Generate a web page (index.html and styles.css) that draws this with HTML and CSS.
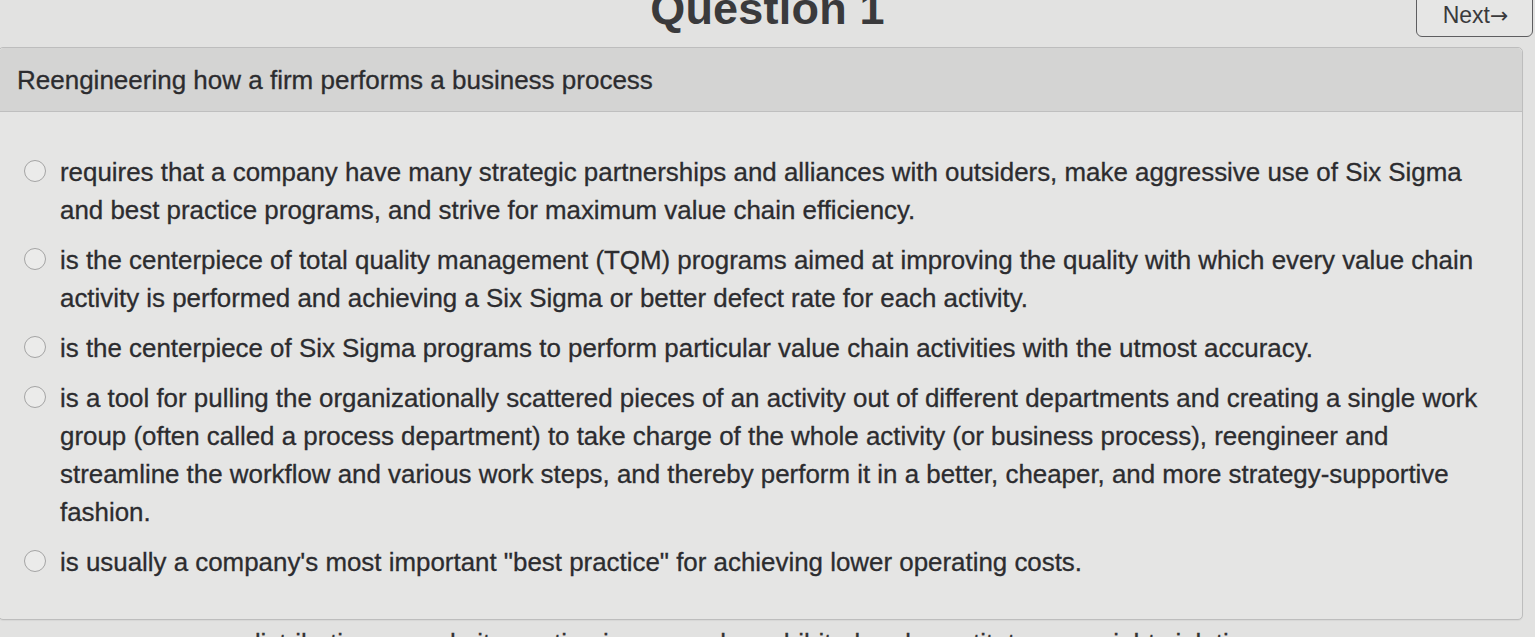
FILE: index.html
```html
<!DOCTYPE html>
<html lang="en">
<head>
<meta charset="utf-8">
<title>Question 1</title>
<link rel="stylesheet" href="styles.css">
</head>
<body>
<div class="page">
  <div class="topbar">
    <div class="spacer"></div>
    <h1 class="title">Question 1</h1>
    <div class="nav">
      <button class="next">Next<span class="arrow">→</span></button>
    </div>
  </div>
  <div class="card">
    <div class="card-head">Reengineering how a firm performs a business process</div>
    <div class="options">
      <label class="option"><span class="radio"></span><span class="opt-text">requires that a company have many strategic partnerships and alliances with outsiders, make aggressive use of Six Sigma and best practice programs, and strive for maximum value chain efficiency.</span></label>
      <label class="option"><span class="radio"></span><span class="opt-text">is the centerpiece of total quality management (TQM) programs aimed at improving the quality with which every value chain activity is performed and achieving a Six Sigma or better defect rate for each activity.</span></label>
      <label class="option"><span class="radio"></span><span class="opt-text">is the centerpiece of Six Sigma programs to perform particular value chain activities with the utmost accuracy.</span></label>
      <label class="option"><span class="radio"></span><span class="opt-text">is a tool for pulling the organizationally scattered pieces of an activity out of different departments and creating a single work group (often called a process department) to take charge of the whole activity (or business process), reengineer and streamline the workflow and various work steps, and thereby perform it in a better, cheaper, and more strategy-supportive fashion.</span></label>
      <label class="option"><span class="radio"></span><span class="opt-text">is usually a company's most important "best practice" for achieving lower operating costs.</span></label>
    </div>
  </div>
  <p class="footer">distribution, or website posting is expressly prohibited and constitutes copyright violation.</p>
</div>
</body>
</html>
```

FILE: styles.css
```css
html, body {
  margin: 0;
  padding: 0;
  background: #e2e2e1;
  overflow: hidden;
}
.page {
  font-family: "Liberation Sans", Arial, Helvetica, sans-serif;
  color: #2c2c2f;
  height: 637px;
  overflow: hidden;
}
.topbar {
  display: grid;
  grid-template-columns: 1fr auto 1fr;
  align-items: start;
  height: 44px;
}
.title {
  margin: -14px 0 0 0;
  font-size: 45px;
  line-height: 45px;
  font-weight: bold;
  color: #3a3a3c;
  letter-spacing: 0.2px;
}
.nav {
  display: flex;
  justify-content: flex-end;
}
.next {
  margin: -6px 2px 0 0;
  width: 117px;
  height: 43px;
  padding: 0 0 0 2px;
  border: 1.5px solid #5e5e60;
  border-radius: 6px;
  background: #e6e6e5;
  font-family: "Liberation Sans", Arial, sans-serif;
  font-size: 23px;
  line-height: 24px;
  color: #3a3a3c;
  text-align: center;
  vertical-align: top;
}
.arrow {
  font-family: "DejaVu Sans", sans-serif;
  font-size: 22px;
}
.card {
  margin: 3px 12px 0 -2px;
  border: 1px solid #bdbdbd;
  border-radius: 5px;
  background: #e5e5e4;
  box-shadow: 0 1px 1px rgba(0,0,0,0.05);
}
.card-head {
  height: 64px;
  box-sizing: border-box;
  padding: 17px 0 0 18px;
  background: #d4d4d3;
  border-bottom: 1px solid #bfbfbf;
  border-radius: 5px 5px 0 0;
  font-size: 26px;
  line-height: 30px;
  -webkit-text-stroke: 0.3px currentColor;
}
.options {
  display: flex;
  flex-direction: column;
  gap: 12px;
  padding: 41px 28px 38px 25px;
}
.option {
  display: flex;
  align-items: flex-start;
  gap: 14px;
  font-size: 25.9px;
  line-height: 38px;
  -webkit-text-stroke: 0.3px currentColor;
}
.radio {
  flex: none;
  width: 20px;
  height: 20px;
  margin-top: 7px;
  border: 1.6px solid #a4a4a4;
  border-radius: 50%;
  background: #ebebea;
  -webkit-text-stroke: 0;
}
.opt-text {
  flex: 1;
}
.footer {
  margin: 8px 0 0 0;
  padding-right: 270px;
  text-align: right;
  font-size: 26px;
  line-height: 30px;
  color: #333;
  white-space: nowrap;
  -webkit-text-stroke: 0.3px currentColor;
}
```
